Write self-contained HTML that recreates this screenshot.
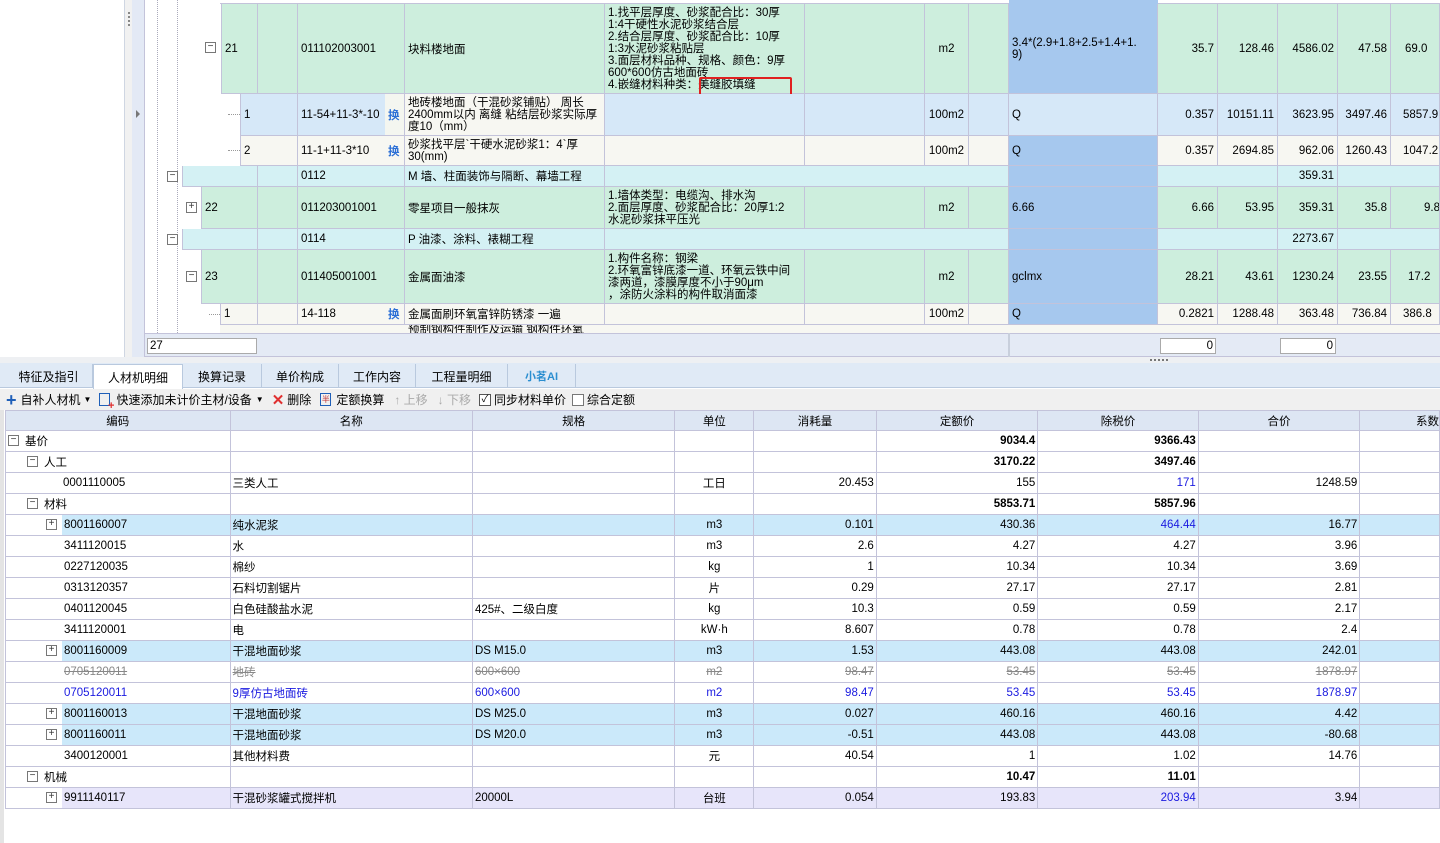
<!DOCTYPE html>
<html><head><meta charset="utf-8">
<style>
*{margin:0;padding:0;box-sizing:border-box}
body{width:1440px;height:843px;overflow:hidden;background:#fff;font-family:"Liberation Sans","WenQuanYi Zen Hei","Noto Sans CJK SC",sans-serif;font-size:11.5px;color:#000;position:relative}
.a{position:absolute}
.c{position:absolute;top:0;height:100%;border-right:1px solid #c3c3da;border-bottom:1px solid #c3c3da;white-space:nowrap;overflow:hidden;padding:0 3px;display:flex;align-items:center}
.r{position:absolute;left:0;width:1440px}
.rt{justify-content:flex-end}
.ct{justify-content:center}
.ml{white-space:normal;line-height:12px;align-items:center}
.hx{color:#2b6fd6;font-weight:bold}
.box{position:absolute;width:11px;height:11px;border:1px solid #777;background:#fff;font-size:10px;line-height:8px;text-align:center;color:#333}
.bl{background:#a6c8ee}
table{border-collapse:collapse;table-layout:fixed;position:absolute;left:5px;top:410px}
td{height:21px;border:1px solid #c3c3da;white-space:nowrap;overflow:hidden;padding:0 2px;font-size:11.5px}
th{height:20px;border:1px solid #c3c3da;background:#dde6f3;font-weight:normal;font-size:11.5px}
.n{text-align:right}.u{text-align:center}.b{font-weight:bold}
.blu td{background:#cbe9fa}.blu td:first-child{background:#fff}
.pur td{background:#e7e5fa}.pur td:first-child{background:#fff}
.tab{position:absolute;top:364px;height:24px;border-right:1px solid #b9c9de;display:flex;align-items:center;justify-content:center;font-size:12px}
</style></head><body>
<!-- left panel -->
<div class="a" style="left:0;top:0;width:125px;height:357px;background:#fff;border-right:1px solid #cfd6e2"></div>
<div class="a" style="left:125px;top:0;width:7px;height:357px;background:#f1f1f1"></div>
<div class="a" style="left:128px;top:12px;width:2px;height:14px;border-left:2px dotted #888"></div>
<div class="a" style="left:132px;top:0;width:13px;height:357px;background:#e3e9f5;border-right:1px solid #c3c3da"></div>
<div class="a" style="left:136px;top:110px;width:0;height:0;border-top:4px solid transparent;border-bottom:4px solid transparent;border-left:4px solid #777"></div>
<div class="a" style="left:157px;top:0;height:333px;border-left:1px dotted #aab"></div>
<div class="a" style="left:177px;top:0;height:333px;border-left:1px dotted #aab"></div>

<!-- top partial row -->
<div class="a" style="top:0;height:4px;left:220px;width:1220px;border-bottom:1px solid #c3c3da"></div>
<!-- blue column -->
<div class="a bl" style="left:1009px;top:0;width:149px;height:333px"></div>

<!-- row 21 -->
<div class="r" style="top:4px;height:90px">
 <div class="box" style="left:205px;top:38px">−</div>
 <div class="c" style="left:221px;width:37px;background:#cdeedd;border-left:1px solid #c3c3da">21</div>
 <div class="c" style="left:258px;width:40px;background:#cdeedd"></div>
 <div class="c" style="left:298px;width:107px;background:#cdeedd">011102003001</div>
 <div class="c" style="left:405px;width:200px;background:#cdeedd">块料楼地面</div>
 <div class="c ml" style="left:605px;width:200px;background:#cdeedd">1.找平层厚度、砂浆配合比：30厚<br>1:4干硬性水泥砂浆结合层<br>2.结合层厚度、砂浆配合比：10厚<br>1:3水泥砂浆粘贴层<br>3.面层材料品种、规格、颜色：9厚<br>600*600仿古地面砖<br>4.嵌缝材料种类：美缝胶填缝</div>
 <div class="c" style="left:805px;width:120px;background:#cdeedd"></div>
 <div class="c ct" style="left:925px;width:44px;background:#cdeedd">m2</div>
 <div class="c" style="left:969px;width:40px;background:#cdeedd"></div>
 <div class="c ml bl" style="left:1009px;width:149px">3.4*(2.9+1.8+2.5+1.4+1.<br>9)</div>
 <div class="c rt" style="left:1158px;width:60px;background:#cdeedd">35.7</div>
 <div class="c rt" style="left:1218px;width:60px;background:#cdeedd">128.46</div>
 <div class="c rt" style="left:1278px;width:60px;background:#cdeedd">4586.02</div>
 <div class="c rt" style="left:1338px;width:53px;background:#cdeedd">47.58</div>
 <div class="c" style="left:1391px;width:49px;background:#cdeedd;padding-left:14px">69.0</div>
</div>
<div class="a" style="left:699px;top:77px;width:93px;height:22px;border:2px solid #e02020;border-radius:2px"></div>

<!-- row 1 -->
<div class="r" style="top:94px;height:42px;background:#d6e8f8;clip-path:inset(0 0 0 221px)">
 <div class="a" style="left:221px;top:0;width:19px;height:42px;background:#fff"></div>
 <div class="a" style="left:228px;top:20px;width:12px;border-top:1px dotted #999"></div>
 <div class="c" style="left:240px;width:58px;border-left:1px solid #c3c3da">1</div>
 <div class="c" style="left:298px;width:87px;border-right:none">11-54+11-3*-10</div>
 <div class="c hx" style="left:385px;width:20px;background:#f4f6f0">换</div>
 <div class="c ml" style="left:405px;width:200px;background:#f7f7f2">地砖楼地面（干混砂浆铺贴） 周长<br>2400mm以内 离缝 粘结层砂浆实际厚<br>度10（mm）</div>
 <div class="c" style="left:605px;width:200px"></div>
 <div class="c" style="left:805px;width:120px"></div>
 <div class="c ct" style="left:925px;width:44px">100m2</div>
 <div class="c" style="left:969px;width:40px"></div>
 <div class="c" style="left:1009px;width:149px">Q</div>
 <div class="c rt" style="left:1158px;width:60px">0.357</div>
 <div class="c rt" style="left:1218px;width:60px">10151.11</div>
 <div class="c rt" style="left:1278px;width:60px">3623.95</div>
 <div class="c rt" style="left:1338px;width:53px">3497.46</div>
 <div class="c" style="left:1391px;width:49px;padding-left:12px">5857.9</div>
</div>
<!-- row 2 -->
<div class="r" style="top:136px;height:30px;background:#f7f7f2;clip-path:inset(0 0 0 221px)">
 <div class="a" style="left:221px;top:0;width:19px;height:30px;background:#fff"></div>
 <div class="a" style="left:228px;top:14px;width:12px;border-top:1px dotted #999"></div>
 <div class="c" style="left:240px;width:58px;border-left:1px solid #c3c3da">2</div>
 <div class="c" style="left:298px;width:87px;border-right:none">11-1+11-3*10</div>
 <div class="c hx" style="left:385px;width:20px">换</div>
 <div class="c ml" style="left:405px;width:200px">砂浆找平层`干硬水泥砂浆1：4`厚<br>30(mm)</div>
 <div class="c" style="left:605px;width:200px"></div>
 <div class="c" style="left:805px;width:120px"></div>
 <div class="c ct" style="left:925px;width:44px">100m2</div>
 <div class="c" style="left:969px;width:40px"></div>
 <div class="c bl" style="left:1009px;width:149px">Q</div>
 <div class="c rt" style="left:1158px;width:60px">0.357</div>
 <div class="c rt" style="left:1218px;width:60px">2694.85</div>
 <div class="c rt" style="left:1278px;width:60px">962.06</div>
 <div class="c rt" style="left:1338px;width:53px">1260.43</div>
 <div class="c" style="left:1391px;width:49px;padding-left:12px">1047.2</div>
</div>
<!-- 0112 -->
<div class="r" style="top:166px;height:21px">
 <div class="box" style="left:167px;top:5px">−</div>
 <div class="c" style="left:182px;width:76px;background:#d4f1f4;border-left:1px solid #c3c3da"></div>
 <div class="c" style="left:258px;width:40px;background:#d4f1f4"></div>
 <div class="c" style="left:298px;width:107px;background:#d4f1f4">0112</div>
 <div class="c" style="left:405px;width:200px;background:#d4f1f4">M 墙、柱面装饰与隔断、幕墙工程</div>
 <div class="c" style="left:605px;width:404px;background:#d4f1f4"></div>
 <div class="c bl" style="left:1009px;width:149px"></div>
 <div class="c" style="left:1158px;width:120px;background:#d4f1f4"></div>
 <div class="c rt" style="left:1278px;width:60px;background:#d4f1f4">359.31</div>
 <div class="c" style="left:1338px;width:102px;background:#d4f1f4"></div>
</div>
<!-- 22 -->
<div class="r" style="top:187px;height:42px">
 <div class="box" style="left:186px;top:15px">+</div>
 <div class="c" style="left:201px;width:57px;background:#cdeedd;border-left:1px solid #c3c3da">22</div>
 <div class="c" style="left:258px;width:40px;background:#cdeedd"></div>
 <div class="c" style="left:298px;width:107px;background:#cdeedd">011203001001</div>
 <div class="c" style="left:405px;width:200px;background:#cdeedd">零星项目一般抹灰</div>
 <div class="c ml" style="left:605px;width:200px;background:#cdeedd">1.墙体类型：电缆沟、排水沟<br>2.面层厚度、砂浆配合比：20厚1:2<br>水泥砂浆抹平压光</div>
 <div class="c" style="left:805px;width:120px;background:#cdeedd"></div>
 <div class="c ct" style="left:925px;width:44px;background:#cdeedd">m2</div>
 <div class="c" style="left:969px;width:40px;background:#cdeedd"></div>
 <div class="c bl" style="left:1009px;width:149px">6.66</div>
 <div class="c rt" style="left:1158px;width:60px;background:#cdeedd">6.66</div>
 <div class="c rt" style="left:1218px;width:60px;background:#cdeedd">53.95</div>
 <div class="c rt" style="left:1278px;width:60px;background:#cdeedd">359.31</div>
 <div class="c rt" style="left:1338px;width:53px;background:#cdeedd">35.8</div>
 <div class="c" style="left:1391px;width:49px;background:#cdeedd;padding-left:33px">9.8</div>
</div>
<!-- 0114 -->
<div class="r" style="top:229px;height:21px">
 <div class="box" style="left:167px;top:5px">−</div>
 <div class="c" style="left:182px;width:76px;background:#d4f1f4;border-left:1px solid #c3c3da"></div>
 <div class="c" style="left:258px;width:40px;background:#d4f1f4"></div>
 <div class="c" style="left:298px;width:107px;background:#d4f1f4">0114</div>
 <div class="c" style="left:405px;width:200px;background:#d4f1f4">P 油漆、涂料、裱糊工程</div>
 <div class="c" style="left:605px;width:404px;background:#d4f1f4"></div>
 <div class="c bl" style="left:1009px;width:149px"></div>
 <div class="c" style="left:1158px;width:120px;background:#d4f1f4"></div>
 <div class="c rt" style="left:1278px;width:60px;background:#d4f1f4">2273.67</div>
 <div class="c" style="left:1338px;width:102px;background:#d4f1f4"></div>
</div>
<!-- 23 -->
<div class="r" style="top:250px;height:54px">
 <div class="box" style="left:186px;top:21px">−</div>
 <div class="c" style="left:201px;width:57px;background:#cdeedd;border-left:1px solid #c3c3da">23</div>
 <div class="c" style="left:258px;width:40px;background:#cdeedd"></div>
 <div class="c" style="left:298px;width:107px;background:#cdeedd">011405001001</div>
 <div class="c" style="left:405px;width:200px;background:#cdeedd">金属面油漆</div>
 <div class="c ml" style="left:605px;width:200px;background:#cdeedd">1.构件名称：钢梁<br>2.环氧富锌底漆一道、环氧云铁中间<br>漆两道，漆膜厚度不小于90μm<br>，涂防火涂料的构件取消面漆</div>
 <div class="c" style="left:805px;width:120px;background:#cdeedd"></div>
 <div class="c ct" style="left:925px;width:44px;background:#cdeedd">m2</div>
 <div class="c" style="left:969px;width:40px;background:#cdeedd"></div>
 <div class="c bl" style="left:1009px;width:149px">gclmx</div>
 <div class="c rt" style="left:1158px;width:60px;background:#cdeedd">28.21</div>
 <div class="c rt" style="left:1218px;width:60px;background:#cdeedd">43.61</div>
 <div class="c rt" style="left:1278px;width:60px;background:#cdeedd">1230.24</div>
 <div class="c rt" style="left:1338px;width:53px;background:#cdeedd">23.55</div>
 <div class="c" style="left:1391px;width:49px;background:#cdeedd;padding-left:17px">17.2</div>
</div>
<!-- 1 14-118 -->
<div class="r" style="top:304px;height:21px;background:#f7f7f2;clip-path:inset(0 0 0 201px)">
 <div class="a" style="left:201px;top:0;width:19px;height:21px;background:#fff"></div>
 <div class="a" style="left:209px;top:10px;width:11px;border-top:1px dotted #999"></div>
 <div class="c" style="left:220px;width:38px;border-left:1px solid #c3c3da">1</div>
 <div class="c" style="left:258px;width:40px"></div>
 <div class="c" style="left:298px;width:87px;border-right:none">14-118</div>
 <div class="c hx" style="left:385px;width:20px">换</div>
 <div class="c" style="left:405px;width:200px">金属面刷环氧富锌防锈漆 一遍</div>
 <div class="c" style="left:605px;width:200px"></div>
 <div class="c" style="left:805px;width:120px"></div>
 <div class="c ct" style="left:925px;width:44px">100m2</div>
 <div class="c" style="left:969px;width:40px"></div>
 <div class="c bl" style="left:1009px;width:149px">Q</div>
 <div class="c rt" style="left:1158px;width:60px">0.2821</div>
 <div class="c rt" style="left:1218px;width:60px">1288.48</div>
 <div class="c rt" style="left:1278px;width:60px">363.48</div>
 <div class="c rt" style="left:1338px;width:53px">736.84</div>
 <div class="c" style="left:1391px;width:49px;padding-left:12px">386.8</div>
</div>
<div class="a" style="left:220px;top:325px;width:1220px;height:8px;background:#f7f7f2;overflow:hidden">
 <div class="a" style="left:188px;top:-4px;font-size:11.5px;white-space:nowrap">预制钢构件制作及运输 钢构件环氧</div>
</div>
<!-- footer -->
<div class="a" style="left:145px;top:333px;width:1295px;height:24px;background:#e4eaf5;border-top:1px solid #c3c3da;border-bottom:1px solid #c3c3da"></div>
<div class="a" style="left:1008px;top:333px;width:2px;height:24px;background:#c8cfdc"></div>
<div class="a" style="left:147px;top:338px;width:110px;height:16px;background:#fff;border:1px solid #aaa;padding-left:2px;line-height:14px">27</div>
<div class="a" style="left:1160px;top:338px;width:56px;height:16px;background:#fff;border:1px solid #aaa;text-align:right;padding-right:2px;line-height:14px">0</div>
<div class="a" style="left:1280px;top:338px;width:56px;height:16px;background:#fff;border:1px solid #aaa;text-align:right;padding-right:2px;line-height:14px">0</div>
<div class="a" style="left:0;top:357px;width:1440px;height:6px;background:#eef0f3"></div>
<div class="a" style="left:1150px;top:359px;width:18px;border-top:2px dotted #777"></div>

<!-- tabs -->
<div class="a" style="left:0;top:363px;width:1440px;height:25px;background:#e0eaf6;border-bottom:1px solid #b9c9de"></div>
<div class="tab" style="left:5px;width:88px">特征及指引</div>
<div class="tab" style="left:93px;width:90px;background:#fff;border:1px solid #b9c9de;border-bottom:none;height:25px">人材机明细</div>
<div class="tab" style="left:183px;width:79px">换算记录</div>
<div class="tab" style="left:262px;width:77px">单价构成</div>
<div class="tab" style="left:339px;width:77px">工作内容</div>
<div class="tab" style="left:416px;width:92px">工程量明细</div>
<div class="tab" style="left:508px;width:68px;color:#2a8ed0;font-weight:bold;font-size:11px">小茗AI</div>
<!-- toolbar -->
<div class="a" style="left:0;top:389px;width:1440px;height:21px;background:#f0f0f0;display:flex;align-items:center;font-size:12px;white-space:nowrap">
 <span style="color:#1f5fb8;font-size:18px;margin-left:6px;font-weight:bold;line-height:10px">+</span><span style="margin-left:4px">自补人材机</span><span style="font-size:8px;margin-left:3px">▼</span>
 <span style="margin-left:8px;display:inline-block;width:11px;height:13px;border:1.5px solid #1f5fb8;position:relative"><span style="position:absolute;right:-5px;bottom:-5px;color:#e03030;font-size:11px;font-weight:bold;line-height:8px">+</span></span><span style="margin-left:6px">快速添加未计价主材/设备</span><span style="font-size:8px;margin-left:4px">▼</span>
 <span style="color:#e03030;font-size:15px;font-weight:bold;margin-left:8px">✕</span><span style="margin-left:3px">删除</span>
 <span style="margin-left:9px;display:inline-block;width:11px;height:13px;border:1px solid #1f5fb8;font-size:8px;line-height:11px;text-align:center;color:#c03030">半</span><span style="margin-left:5px">定额换算</span>
 <span style="color:#aaa;margin-left:10px">↑ 上移</span><span style="color:#aaa;margin-left:10px">↓ 下移</span>
 <span style="margin-left:8px;display:inline-block;width:12px;height:12px;border:1px solid #555;background:#fff;font-size:10px;line-height:10px;text-align:center">✓</span><span style="margin-left:3px">同步材料单价</span>
 <span style="margin-left:6px;display:inline-block;width:12px;height:12px;border:1px solid #777;background:#fff"></span><span style="margin-left:3px">综合定额</span>
</div>
<div class="a" style="left:0;top:410px;width:4px;height:433px;background:#e4e4e4"></div>

<table>
<colgroup><col style="width:225px"><col style="width:243px"><col style="width:203px"><col style="width:79px"><col style="width:123px"><col style="width:162px"><col style="width:161px"><col style="width:162px"><col style="width:80px"></colgroup>
<tr><th>编码</th><th>名称</th><th>规格</th><th>单位</th><th>消耗量</th><th>定额价</th><th>除税价</th><th>合价</th><th style="text-align:right">系数</th></tr>
<tr><td style="padding-left:19px;position:relative"><span class="box" style="left:2px;top:4px">−</span>基价</td><td></td><td></td><td></td><td></td><td class="n b">9034.4</td><td class="n b">9366.43</td><td></td><td></td></tr>
<tr><td style="padding-left:38px;position:relative"><span class="box" style="left:21px;top:4px">−</span>人工</td><td></td><td></td><td></td><td></td><td class="n b">3170.22</td><td class="n b">3497.46</td><td></td><td></td></tr>
<tr><td style="padding-left:57px">0001110005</td><td>三类人工</td><td></td><td class="u">工日</td><td class="n">20.453</td><td class="n">155</td><td class="n" style="color:#1a1ae0">171</td><td class="n">1248.59</td><td></td></tr>
<tr><td style="padding-left:38px;position:relative"><span class="box" style="left:21px;top:4px">−</span>材料</td><td></td><td></td><td></td><td></td><td class="n b">5853.71</td><td class="n b">5857.96</td><td></td><td></td></tr>
<tr class="blu"><td style="padding:0;position:relative"><span class="box" style="left:40px;top:4px">+</span><div style="margin-left:56px;background:#cbe9fa;height:20px;line-height:20px;padding-left:2px">8001160007</div></td><td>纯水泥浆</td><td></td><td class="u">m3</td><td class="n">0.101</td><td class="n">430.36</td><td class="n" style="color:#1a1ae0">464.44</td><td class="n">16.77</td><td></td></tr>
<tr><td style="padding-left:58px">3411120015</td><td>水</td><td></td><td class="u">m3</td><td class="n">2.6</td><td class="n">4.27</td><td class="n">4.27</td><td class="n">3.96</td><td></td></tr>
<tr><td style="padding-left:58px">0227120035</td><td>棉纱</td><td></td><td class="u">kg</td><td class="n">1</td><td class="n">10.34</td><td class="n">10.34</td><td class="n">3.69</td><td></td></tr>
<tr><td style="padding-left:58px">0313120357</td><td>石料切割锯片</td><td></td><td class="u">片</td><td class="n">0.29</td><td class="n">27.17</td><td class="n">27.17</td><td class="n">2.81</td><td></td></tr>
<tr><td style="padding-left:58px">0401120045</td><td>白色硅酸盐水泥</td><td>425#、二级白度</td><td class="u">kg</td><td class="n">10.3</td><td class="n">0.59</td><td class="n">0.59</td><td class="n">2.17</td><td></td></tr>
<tr><td style="padding-left:58px">3411120001</td><td>电</td><td></td><td class="u">kW·h</td><td class="n">8.607</td><td class="n">0.78</td><td class="n">0.78</td><td class="n">2.4</td><td></td></tr>
<tr class="blu"><td style="padding:0;position:relative"><span class="box" style="left:40px;top:4px">+</span><div style="margin-left:56px;background:#cbe9fa;height:20px;line-height:20px;padding-left:2px">8001160009</div></td><td>干混地面砂浆</td><td>DS M15.0</td><td class="u">m3</td><td class="n">1.53</td><td class="n">443.08</td><td class="n">443.08</td><td class="n">242.01</td><td></td></tr>
<tr style="color:#888;text-decoration:line-through"><td style="padding-left:58px">0705120011</td><td>地砖</td><td>600×600</td><td class="u">m2</td><td class="n">98.47</td><td class="n">53.45</td><td class="n">53.45</td><td class="n">1878.97</td><td></td></tr>
<tr style="color:#1a1ae0"><td style="padding-left:58px">0705120011</td><td>9厚仿古地面砖</td><td>600×600</td><td class="u">m2</td><td class="n">98.47</td><td class="n">53.45</td><td class="n">53.45</td><td class="n">1878.97</td><td></td></tr>
<tr class="blu"><td style="padding:0;position:relative"><span class="box" style="left:40px;top:4px">+</span><div style="margin-left:56px;background:#cbe9fa;height:20px;line-height:20px;padding-left:2px">8001160013</div></td><td>干混地面砂浆</td><td>DS M25.0</td><td class="u">m3</td><td class="n">0.027</td><td class="n">460.16</td><td class="n">460.16</td><td class="n">4.42</td><td></td></tr>
<tr class="blu"><td style="padding:0;position:relative"><span class="box" style="left:40px;top:4px">+</span><div style="margin-left:56px;background:#cbe9fa;height:20px;line-height:20px;padding-left:2px">8001160011</div></td><td>干混地面砂浆</td><td>DS M20.0</td><td class="u">m3</td><td class="n">-0.51</td><td class="n">443.08</td><td class="n">443.08</td><td class="n">-80.68</td><td></td></tr>
<tr><td style="padding-left:58px">3400120001</td><td>其他材料费</td><td></td><td class="u">元</td><td class="n">40.54</td><td class="n">1</td><td class="n">1.02</td><td class="n">14.76</td><td></td></tr>
<tr><td style="padding-left:38px;position:relative"><span class="box" style="left:21px;top:4px">−</span>机械</td><td></td><td></td><td></td><td></td><td class="n b">10.47</td><td class="n b">11.01</td><td></td><td></td></tr>
<tr class="pur"><td style="padding:0;position:relative"><span class="box" style="left:40px;top:4px">+</span><div style="margin-left:56px;background:#e7e5fa;height:20px;line-height:20px;padding-left:2px">9911140117</div></td><td>干混砂浆罐式搅拌机</td><td>20000L</td><td class="u">台班</td><td class="n">0.054</td><td class="n">193.83</td><td class="n" style="color:#1a1ae0">203.94</td><td class="n">3.94</td><td></td></tr>
</table>
</body></html>
